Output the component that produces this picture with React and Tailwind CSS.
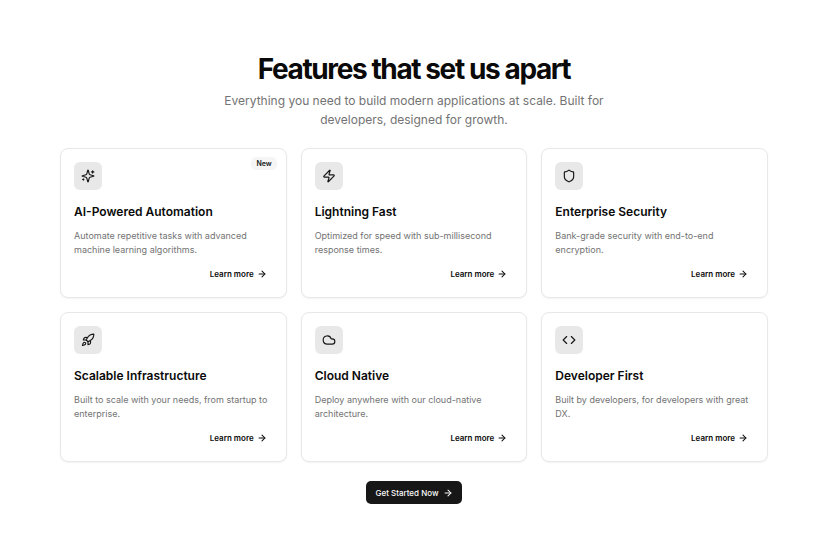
import { ArrowRight, Cloud, Code, Rocket, Shield, Zap } from "lucide-react";

function Sparkles(props) {
  return (
    <svg viewBox="0 0 24 24" fill="none" stroke="currentColor" strokeWidth="2" strokeLinecap="round" strokeLinejoin="round" {...props}>
      <path d="M9.937 15.5A2 2 0 0 0 8.5 14.063l-6.135-1.582a.5.5 0 0 1 0-.962L8.5 9.936A2 2 0 0 0 9.937 8.5l1.582-6.135a.5.5 0 0 1 .963 0L14.063 8.5A2 2 0 0 0 15.5 9.937l6.135 1.581a.5.5 0 0 1 0 .964L15.5 14.063a2 2 0 0 0-1.437 1.437l-1.582 6.135a.5.5 0 0 1-.963 0z" />
      <path d="M20 3v4" />
      <path d="M22 5h-4" />
      <path d="M4 17v2" />
      <path d="M5 18H3" />
    </svg>
  );
}

const features = [
  {
    icon: Sparkles,
    title: "AI-Powered Automation",
    description: "Automate repetitive tasks with advanced machine learning algorithms.",
    badge: "New",
  },
  {
    icon: Zap,
    title: "Lightning Fast",
    description: "Optimized for speed with sub-millisecond response times.",
  },
  {
    icon: Shield,
    title: "Enterprise Security",
    description: "Bank-grade security with end-to-end encryption.",
  },
  {
    icon: Rocket,
    title: "Scalable Infrastructure",
    description: "Built to scale with your needs, from startup to enterprise.",
  },
  {
    icon: Cloud,
    title: "Cloud Native",
    description: "Deploy anywhere with our cloud-native architecture.",
  },
  {
    icon: Code,
    title: "Developer First",
    description: "Built by developers, for developers with great DX.",
  },
];

function FeatureCard({ icon: Icon, title, description, badge }) {
  return (
    <article className="relative flex flex-col rounded-lg border border-[#e8e8e8] bg-white px-[13px] pt-[13px] pb-3 shadow-xs">
      {badge && (
        <span className="absolute top-2 right-[9px] rounded-[5px] bg-[#f5f5f5] px-[5px] text-[7px] leading-[13px] font-semibold text-[#171717]">
          {badge}
        </span>
      )}
      <div className="flex size-7 items-center justify-center rounded-md bg-[#e8e8e8] text-[#171717]">
        <Icon className="size-[14px]" aria-hidden="true" />
      </div>
      <h3 className="mt-[14px] text-[12px] leading-4 font-semibold">{title}</h3>
      <p className="mt-[9px] text-[9px] leading-[14px] text-[#737373]">{description}</p>
      <div className="mt-auto flex justify-end pt-[6px]">
        <button type="button" className="flex h-[22px] items-center gap-[3px] px-[6px] text-[8px] font-semibold">
          Learn more
          <ArrowRight className="size-[10px]" strokeWidth={2.5} aria-hidden="true" />
        </button>
      </div>
    </article>
  );
}

export default function App() {
  return (
    <main className="min-h-screen bg-white font-['Inter',sans-serif] text-[#0a0a0a]">
      <section className="mx-auto max-w-[736px] px-[14px] py-[55px]">
        <header className="flex flex-col items-center text-center">
          <h2 className="text-[28px] leading-7 font-bold tracking-tighter">Features that set us apart</h2>
          <p className="mt-2 max-w-[386px] text-[12px] leading-[19px] text-[#737373]">
            Everything you need to build modern applications at scale. Built for developers, designed for growth.
          </p>
        </header>
        <div className="mt-[19px] grid grid-cols-3 gap-[14px]">
          {features.map((feature) => (
            <FeatureCard key={feature.title} {...feature} />
          ))}
        </div>
        <div className="mt-[19px] flex justify-center">
          <button
            type="button"
            className="flex h-[23px] items-center gap-1 rounded-[5px] bg-[#171717] px-[9px] text-[8px] font-medium text-[#fafafa]"
          >
            Get Started Now
            <ArrowRight className="size-[10px]" strokeWidth={2.5} aria-hidden="true" />
          </button>
        </div>
      </section>
    </main>
  );
}
